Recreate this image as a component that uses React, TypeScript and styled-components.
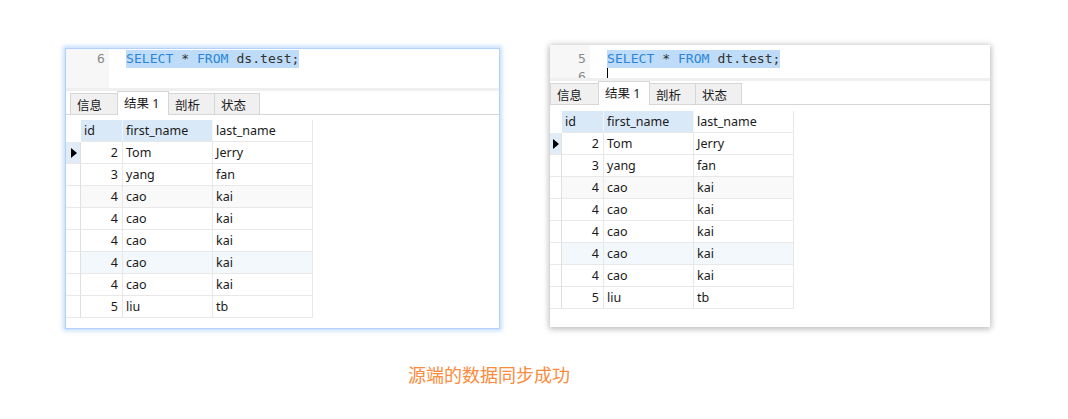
import React from 'react';
import styled, { createGlobalStyle } from 'styled-components';

const Global = createGlobalStyle`
  html, body { margin: 0; padding: 0; background: #ffffff; }
  body {
    width: 1068px;
    height: 419px;
    overflow: hidden;
    font-family: "Noto Sans", "Noto Sans CJK SC", sans-serif;
  }
`;

const Page = styled.div`
  display: flex;
  flex-direction: column;
  padding-top: 45px;
  height: 419px;
  box-sizing: border-box;
`;

const PanelsRow = styled.div`
  display: flex;
  align-items: flex-start;
  gap: 50px;
  padding-left: 65px;
`;

const Panel = styled.div<{ $blue?: boolean; $top: number; $width: number; $height: number }>`
  margin-top: ${(p) => p.$top}px;
  width: ${(p) => p.$width}px;
  height: ${(p) => p.$height}px;
  box-sizing: border-box;
  background: #ffffff;
  display: flex;
  flex-direction: column;
  overflow: hidden;
  border: ${(p) => (p.$blue ? '1px solid #b4d2f8' : 'none')};
  box-shadow: ${(p) =>
    p.$blue ? '0 0 4px 2px rgba(150, 195, 250, 0.55)' : '0 1px 6px 1px rgba(0, 0, 0, 0.28)'};
`;

const Editor = styled.div<{ $height: number; $padTop: number }>`
  display: flex;
  height: ${(p) => p.$height}px;
  flex: none;
  overflow: hidden;
  font-family: "DejaVu Sans Mono", "Liberation Mono", monospace;
  font-size: 13.1px;
  line-height: 18px;
  --pad-top: ${(p) => p.$padTop}px;
`;

const Gutter = styled.div<{ $width: number }>`
  width: ${(p) => p.$width}px;
  flex: none;
  background: #f7f7f7;
  box-sizing: border-box;
  padding: var(--pad-top) 4px 0 0;
  display: flex;
  flex-direction: column;
  align-items: flex-end;
  color: #8a8a8a;
`;

const CodeArea = styled.div`
  flex: 1;
  padding: var(--pad-top) 0 0 17px;
  display: flex;
  flex-direction: column;
  color: #333333;
`;

const CodeLine = styled.div`
  height: 18px;
  flex: none;
  display: flex;
  align-items: stretch;
  white-space: pre;
`;

const Selected = styled.span`
  background: #bedcf8;
`;

const Keyword = styled.span`
  color: #2b86d9;
`;

const Caret = styled.span`
  display: inline-block;
  width: 1px;
  height: 11px;
  background: #000;
`;

const Separator = styled.div`
  height: 3px;
  flex: none;
  background: #efefef;
`;

const TabBar = styled.div<{ $pad: number }>`
  height: 24px;
  flex: none;
  box-sizing: border-box;
  border-bottom: 1px solid #d6d6d6;
  display: flex;
  align-items: flex-end;
  padding-left: ${(p) => p.$pad}px;
`;

const Tab = styled.div<{ $active?: boolean; $width: number }>`
  width: ${(p) => p.$width}px;
  height: ${(p) => (p.$active ? 24 : 21)}px;
  margin-bottom: ${(p) => (p.$active ? -1 : 0)}px;
  margin-right: -1px;
  box-sizing: border-box;
  border: 1px solid #d6d6d6;
  border-bottom: none;
  background: ${(p) => (p.$active ? '#ffffff' : '#f0f0f0')};
  position: relative;
  z-index: ${(p) => (p.$active ? 1 : 0)};
  display: flex;
  align-items: center;
  padding-left: 6px;
  padding-bottom: ${(p) => (p.$active ? 2 : 0)}px;
  font-size: 12.5px;
  color: #1a1a1a;
`;

const Grid = styled.div<{ $gap: number; $ind: number }>`
  margin-top: ${(p) => p.$gap}px;
  display: grid;
  grid-template-columns: ${(p) => p.$ind}px 42px 90px 100px;
  grid-auto-rows: 22px;
  font-size: 12.5px;
  color: #1a1a1a;
`;

const Cell = styled.div<{ $right?: boolean; $bg?: string; $head?: boolean }>`
  box-sizing: border-box;
  border-right: 1px solid ${(p) => (p.$head ? '#f2f6fb' : '#e8e8e8')};
  border-bottom: 1px solid #e8e8e8;
  background: ${(p) => p.$bg || 'transparent'};
  display: flex;
  align-items: center;
  justify-content: ${(p) => (p.$right ? 'flex-end' : 'flex-start')};
  padding: ${(p) => (p.$right ? '0 4px 0 0' : '0 0 0 3px')};
  white-space: nowrap;
  overflow: hidden;
`;

const IndicatorCell = styled.div<{ $bg?: string; $pad: number; $head?: boolean }>`
  box-sizing: border-box;
  border-right: ${(p) => (p.$head ? 'none' : '1px solid #e0e0e0')};
  border-bottom: ${(p) => (p.$head ? 'none' : '1px solid #e8e8e8')};
  background: ${(p) => p.$bg || 'transparent'};
  display: flex;
  align-items: center;
  padding-left: ${(p) => p.$pad}px;
`;

const Triangle = styled.span`
  width: 0;
  height: 0;
  border-top: 5px solid transparent;
  border-bottom: 5px solid transparent;
  border-left: 6px solid #000;
`;

const Caption = styled.div`
  margin-top: 35px;
  padding-left: 408px;
  font-size: 18px;
  line-height: 20px;
  color: #fb8b3d;
  font-family: "Noto Sans CJK SC", sans-serif;
`;

type Row = [number, string, string];
const rows: Row[] = [
  [2, 'Tom', 'Jerry'],
  [3, 'yang', 'fan'],
  [4, 'cao', 'kai'],
  [4, 'cao', 'kai'],
  [4, 'cao', 'kai'],
  [4, 'cao', 'kai'],
  [4, 'cao', 'kai'],
  [5, 'liu', 'tb'],
];

const HEAD_BG = '#dae9f8';

function rowBg(i: number): string | undefined {
  if (i === 5) return '#f3f8fd';
  if (i === 2) return '#f9f9f9';
  return undefined;
}

function ResultGrid({ gap, ind, triPad }: { gap: number; ind: number; triPad: number }) {
  return (
    <Grid $gap={gap} $ind={ind}>
      <IndicatorCell $pad={0} $head />
      <Cell $head $bg={HEAD_BG}>id</Cell>
      <Cell $head $bg={HEAD_BG}>first_name</Cell>
      <Cell>last_name</Cell>
      {rows.map((r, i) => (
        <React.Fragment key={i}>
          <IndicatorCell $pad={triPad} $bg={i === 0 ? '#e1ecf7' : undefined}>
            {i === 0 && <Triangle />}
          </IndicatorCell>
          <Cell $right $bg={rowBg(i)}>{r[0]}</Cell>
          <Cell $bg={rowBg(i)}>{r[1]}</Cell>
          <Cell $bg={rowBg(i)}>{r[2]}</Cell>
        </React.Fragment>
      ))}
    </Grid>
  );
}

function Tabs({ pad, widths }: { pad: number; widths: number[] }) {
  const labels = ['信息', '结果 1', '剖析', '状态'];
  return (
    <TabBar $pad={pad}>
      {labels.map((l, i) => (
        <Tab key={l} $width={widths[i]} $active={i === 1}>
          {l}
        </Tab>
      ))}
    </TabBar>
  );
}

export default function App() {
  return (
    <>
      <Global />
      <Page>
        <PanelsRow>
          <Panel $blue $top={3} $width={435} $height={281}>
            <Editor $height={39} $padTop={1}>
              <Gutter $width={43}>
                <div>6</div>
              </Gutter>
              <CodeArea>
                <CodeLine>
                  <Selected>
                    <Keyword>SELECT</Keyword> * <Keyword>FROM</Keyword> ds.test;
                  </Selected>
                </CodeLine>
              </CodeArea>
            </Editor>
            <Separator />
            <Tabs pad={4} widths={[48, 52, 47, 46]} />
            <ResultGrid gap={5} ind={15} triPad={5} />
          </Panel>
          <Panel $top={0} $width={440} $height={282}>
            <Editor $height={33} $padTop={5}>
              <Gutter $width={40}>
                <div>5</div>
                <div>6</div>
              </Gutter>
              <CodeArea>
                <CodeLine>
                  <Selected>
                    <Keyword>SELECT</Keyword> * <Keyword>FROM</Keyword> dt.test;
                  </Selected>
                </CodeLine>
                <CodeLine>
                  <Caret />
                </CodeLine>
              </CodeArea>
            </Editor>
            <Separator />
            <Tabs pad={0} widths={[49, 52, 47, 47]} />
            <ResultGrid gap={6} ind={12} triPad={3} />
          </Panel>
        </PanelsRow>
        <Caption>源端的数据同步成功</Caption>
      </Page>
    </>
  );
}
